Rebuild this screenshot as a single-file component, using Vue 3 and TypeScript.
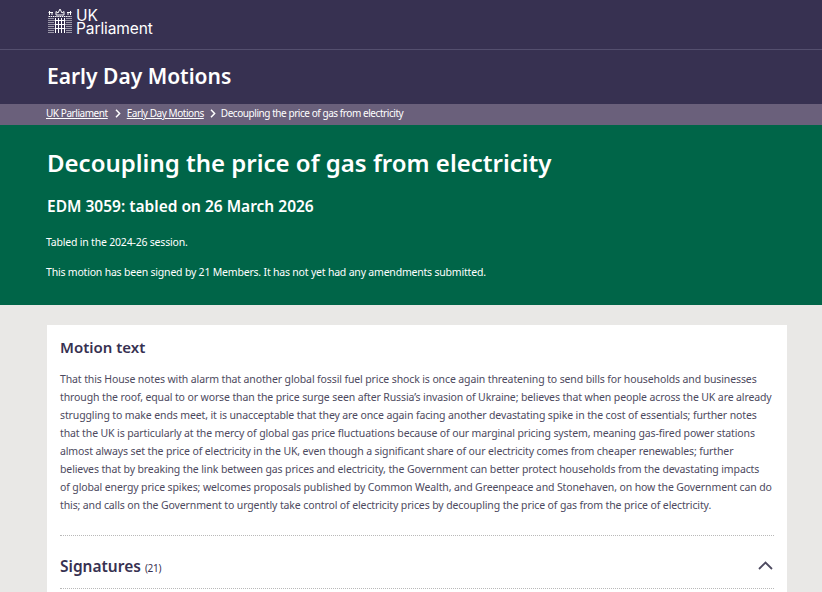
<script setup lang="ts">
const motionLines = [
  'That this House notes with alarm that another global fossil fuel price shock is once again threatening to send bills for households and businesses',
  'through the roof, equal to or worse than the price surge seen after Russia’s invasion of Ukraine; believes that when people across the UK are already',
  'struggling to make ends meet, it is unacceptable that they are once again facing another devastating spike in the cost of essentials; further notes',
  'that the UK is particularly at the mercy of global gas price fluctuations because of our marginal pricing system, meaning gas-fired power stations',
  'almost always set the price of electricity in the UK, even though a significant share of our electricity comes from cheaper renewables; further',
  'believes that by breaking the link between gas prices and electricity, the Government can better protect households from the devastating impacts',
  'of global energy price spikes; welcomes proposals published by Common Wealth, and Greenpeace and Stonehaven, on how the Government can do',
  'this; and calls on the Government to urgently take control of electricity prices by decoupling the price of gas from the price of electricity.',
]
</script>

<template>
  <div class="page">
    <header class="top">
      <div class="logo">
        <svg class="crest" width="24" height="26" viewBox="0 0 24 26" aria-hidden="true">
          <g fill="none" stroke="#fff" stroke-width="1">
            <path d="M1 10V25.500M3 10V25.500M5 10V25.500M19 10V25.500M21 10V25.500M23 10V25.500" stroke-dasharray="1 1" />
            <path d="M7.500 10V25M10.500 10V25M13.500 10V25M16.500 10V25" />
            <path d="M6.500 12.500H17.500M6.500 16.500H17.500M6.500 20.500H17.500" />
            <path d="M.5 8.500H23.500" stroke-dasharray="1.500 .7" />
            <path d="M1.500 3V7M4 4V7M20 4V7M22.500 3V7" />
            <path d="M.5 4.500H5M19 4.500H23.500" />
            <path d="M8 7V3.500L10 5L12 1L14 5L16 3.500V7Z" />
          </g>
        </svg>
        <div class="wordmark"><span>UK</span><span>Parliament</span></div>
      </div>
    </header>
    <div class="site-title"><h2>Early Day Motions</h2></div>
    <nav class="crumbs">
      <a href="#">UK Parliament</a>
      <svg class="sep first" width="6" height="9" viewBox="0 0 6 9"><path d="M1 .8 4.600 4.500 1 8.200" fill="none" stroke="#fff" stroke-width="1.500" /></svg>
      <a href="#">Early Day Motions</a>
      <svg class="sep" width="6" height="9" viewBox="0 0 6 9"><path d="M1 .8 4.600 4.500 1 8.200" fill="none" stroke="#fff" stroke-width="1.500" /></svg>
      <span>Decoupling the price of gas from electricity</span>
    </nav>
    <section class="hero">
      <h1>Decoupling the price of gas from electricity</h1>
      <h2>EDM 3059: tabled on 26 March 2026</h2>
      <p>Tabled in the 2024-26 session.</p>
      <p>This motion has been signed by 21 Members. It has not yet had any amendments submitted.</p>
    </section>
    <main class="content">
      <article class="card">
        <h3>Motion text</h3>
        <p class="motion">
          <template v-for="line in motionLines" :key="line">{{ line }}<br /></template>
        </p>
        <div class="signatures">
          <h3>Signatures <span class="count">(21)</span></h3>
          <svg width="15" height="9" viewBox="0 0 15 9" aria-hidden="true"><path d="M1 8 7.500 1.500 14 8" fill="none" stroke="#4d4a60" stroke-width="1.800" /></svg>
        </div>
      </article>
    </main>
  </div>
</template>

<style>
html, body {
  margin: 0;
  background: #e9e8e6;
}
</style>

<style scoped>
.page {
  font-family: "Noto Sans", "Open Sans", sans-serif;
  height: 592px;
  overflow: hidden;
}
.top {
  background: #373151;
  height: 41px;
  border-bottom: 1px solid #544f6e;
  padding: 8px 47px 0;
}
.logo {
  display: flex;
  align-items: flex-start;
  gap: 4px;
  margin-left: 1px;
  color: #fff;
}
.wordmark {
  display: flex;
  flex-direction: column;
  font-family: Inter, sans-serif;
  font-size: 15.500px;
  line-height: 13px;
  letter-spacing: -0.1px;
  padding-top: 1px;
}
.site-title {
  background: #373151;
  height: 54px;
  padding: 0 47px 2px;
  box-sizing: border-box;
  display: flex;
  align-items: center;
}
.site-title h2 {
  margin: 0;
  color: #fff;
  font-size: 21px;
  font-weight: 600;
}
.crumbs {
  background: #6a607b;
  height: 21px;
  padding: 0 46px 3px;
  box-sizing: border-box;
  display: flex;
  align-items: center;
  color: #fff;
  font-size: 10px;
  letter-spacing: -0.44px;
}
.crumbs a {
  color: #fff;
  text-decoration: underline;
}
.sep {
  margin: 0 5px 0 6px;
}
.sep.first {
  margin: 0 6px 0 7px;
}
.hero {
  background: #006548;
  color: #fff;
  height: 180px;
  padding: 0 47px;
  box-sizing: border-box;
  overflow: hidden;
}
.hero h1 {
  margin: 22px 0 0;
  font-size: 24px;
  line-height: 32px;
  font-weight: 600;
}
.hero h2 {
  margin: 17px 0 0;
  font-size: 15.500px;
  line-height: 20px;
  font-weight: 600;
}
.hero p {
  margin: 0 0 0 -1px;
  font-size: 10.500px;
  line-height: 14px;
  letter-spacing: -0.2px;
}
.hero h2 + p {
  margin-top: 19px;
}
.hero p + p {
  margin-top: 16px;
}
.content {
  padding: 20px 35px 0 47px;
}
.card {
  background: #fff;
  padding: 12px 13px 0;
  height: 267px;
  box-sizing: border-box;
}
.card h3 {
  margin: 0;
  color: #373151;
  font-size: 15px;
  line-height: 20px;
  font-weight: 600;
}
.motion {
  margin: 13px 0 0;
  padding-bottom: 21px;
  border-bottom: 1px dotted #b9b9b9;
  color: #4d4a60;
  font-size: 10.500px;
  line-height: 18px;
  letter-spacing: -0.12px;
  white-space: nowrap;
}
.signatures {
  display: flex;
  align-items: center;
  justify-content: space-between;
  height: 52px;
  border-bottom: 1px dotted #b9b9b9;
  padding-right: 1px;
}
.card .signatures h3 {
  font-size: 15.500px;
  padding-top: 9px;
}
.signatures svg {
  margin-top: 6px;
}
.count {
  font-size: 10px;
  font-weight: 400;
  letter-spacing: -0.3px;
}
</style>
